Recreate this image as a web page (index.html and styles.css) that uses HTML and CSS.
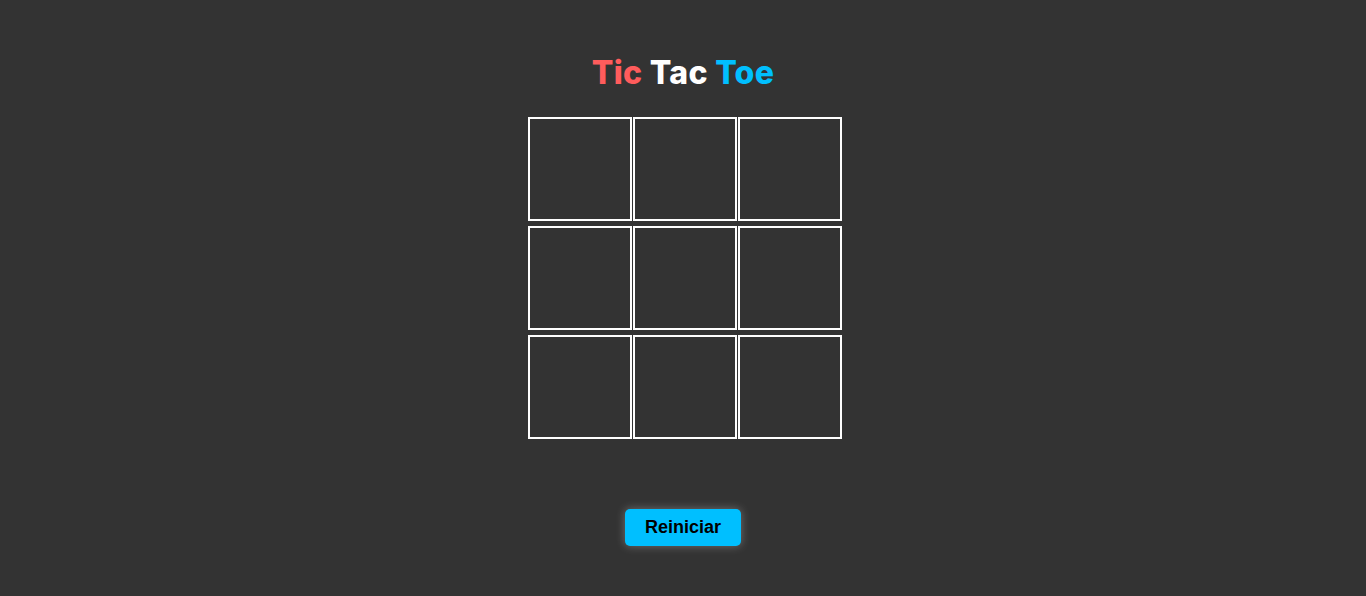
FILE: index.html
```html
<!DOCTYPE html>
<html lang="es">
<head>
<meta charset="utf-8">
<title>Tic Tac Toe</title>
<link rel="stylesheet" href="styles.css">
</head>
<body>
<main class="game">
  <h1 class="title"><span class="tic">Tic</span> <span class="tac">Tac</span> <span class="toe">Toe</span></h1>
  <div class="board">
    <div class="cell"></div><div class="cell"></div><div class="cell"></div>
    <div class="cell"></div><div class="cell"></div><div class="cell"></div>
    <div class="cell"></div><div class="cell"></div><div class="cell"></div>
  </div>
  <button class="reset">Reiniciar</button>
</main>
</body>
</html>
```
FILE: styles.css
```css
html, body {
  margin: 0;
  padding: 0;
  background: #333333;
  height: 100%;
}
.game {
  display: flex;
  flex-direction: column;
  align-items: center;
  padding-top: 53px;
  padding-left: 3px;
}
.title {
  margin: 0 0 0 -3px;
  font-family: Inter, "Noto Sans", sans-serif;
  font-weight: 800;
  font-size: 32px;
  line-height: 40px;
  letter-spacing: 0.3px;
}
.tic { color: #ff5c5c; }
.tac { color: #ffffff; }
.toe { color: #00bfff; }
.board {
  margin-top: 24px;
  display: grid;
  grid-template-columns: repeat(3, 104px);
  grid-auto-rows: 104px;
  column-gap: 1px;
  row-gap: 5px;
}
.cell {
  box-sizing: border-box;
  border: 2px solid #ffffff;
  background: #333333;
}
.reset {
  margin-top: 70px;
  margin-left: -3px;
  background: #00bfff;
  color: #000000;
  border: none;
  border-radius: 5px;
  font-family: "Liberation Sans", Arial, sans-serif;
  font-weight: bold;
  font-size: 18px;
  line-height: 21px;
  padding: 8px 20px;
  box-shadow: 0 0 10px rgba(255, 255, 255, 0.3);
  cursor: pointer;
}
```
